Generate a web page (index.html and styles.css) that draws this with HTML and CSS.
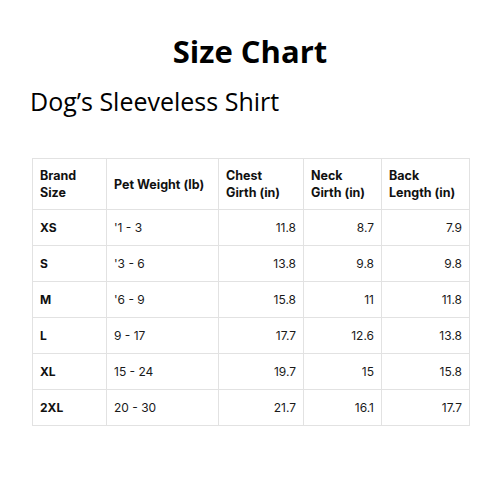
FILE: index.html
```html
<!DOCTYPE html>
<html lang="en">
<head>
  <meta charset="UTF-8" />
  <title>Size Chart</title>
  <link rel="stylesheet" href="styles.css">
</head>
<body>
  <h1 class="title">Size Chart</h1>
  <h2 class="subtitle">Dog’s Sleeveless Shirt</h2>

  <table class="chart">
    <colgroup>
      <col class="c1"><col class="c2"><col class="c3"><col class="c4"><col class="c5">
    </colgroup>
    <thead>
      <tr>
        <th>Brand<br>Size</th>
        <th>Pet Weight (lb)</th>
        <th>Chest<br>Girth (in)</th>
        <th>Neck<br>Girth (in)</th>
        <th>Back<br>Length (in)</th>
      </tr>
    </thead>
    <tbody>
      <tr><td class="size">XS</td><td>'1 - 3</td><td class="num">11.8</td><td class="num">8.7</td><td class="num">7.9</td></tr>
      <tr><td class="size">S</td><td>'3 - 6</td><td class="num">13.8</td><td class="num">9.8</td><td class="num">9.8</td></tr>
      <tr><td class="size">M</td><td>'6 - 9</td><td class="num">15.8</td><td class="num">11</td><td class="num">11.8</td></tr>
      <tr><td class="size">L</td><td>9 - 17</td><td class="num">17.7</td><td class="num">12.6</td><td class="num">13.8</td></tr>
      <tr><td class="size">XL</td><td>15 - 24</td><td class="num">19.7</td><td class="num">15</td><td class="num">15.8</td></tr>
      <tr><td class="size">2XL</td><td>20 - 30</td><td class="num">21.7</td><td class="num">16.1</td><td class="num">17.7</td></tr>
    </tbody>
  </table>
</body>
</html>
```

FILE: styles.css
```css
body {
  margin: 0;
  padding: 0;
  background: #fff;
  color: #000;
  font-family: "Open Sans", sans-serif;
}

.title {
  margin: 32px 0 0;
  text-align: center;
  font-size: 31px;
  font-weight: 700;
  line-height: 38px;
}

.subtitle {
  margin: 16px 0 0 30px;
  font-size: 25px;
  font-weight: 400;
  line-height: 30px;
}

.chart {
  margin: 42px 0 0 32px;
  width: 437px;
  border-collapse: collapse;
  table-layout: fixed;
  font-family: Inter, "Noto Sans", sans-serif;
  font-size: 12px;
  color: #1a1a1a;
}

.c1 { width: 74px; }
.c2 { width: 112px; }
.c3 { width: 85px; }
.c4 { width: 78px; }
.c5 { width: 88px; }

.chart th,
.chart td {
  border: 1.5px solid #e2e2e2;
  padding: 0 7px;
  text-align: left;
}

.chart th {
  height: 50px;
  font-size: 12.5px;
  font-weight: 700;
  line-height: 17px;
  color: #111;
}

.chart td {
  height: 35px;
}

.chart td.size {
  font-weight: 700;
  color: #111;
}

.chart td.num {
  text-align: right;
}
```
